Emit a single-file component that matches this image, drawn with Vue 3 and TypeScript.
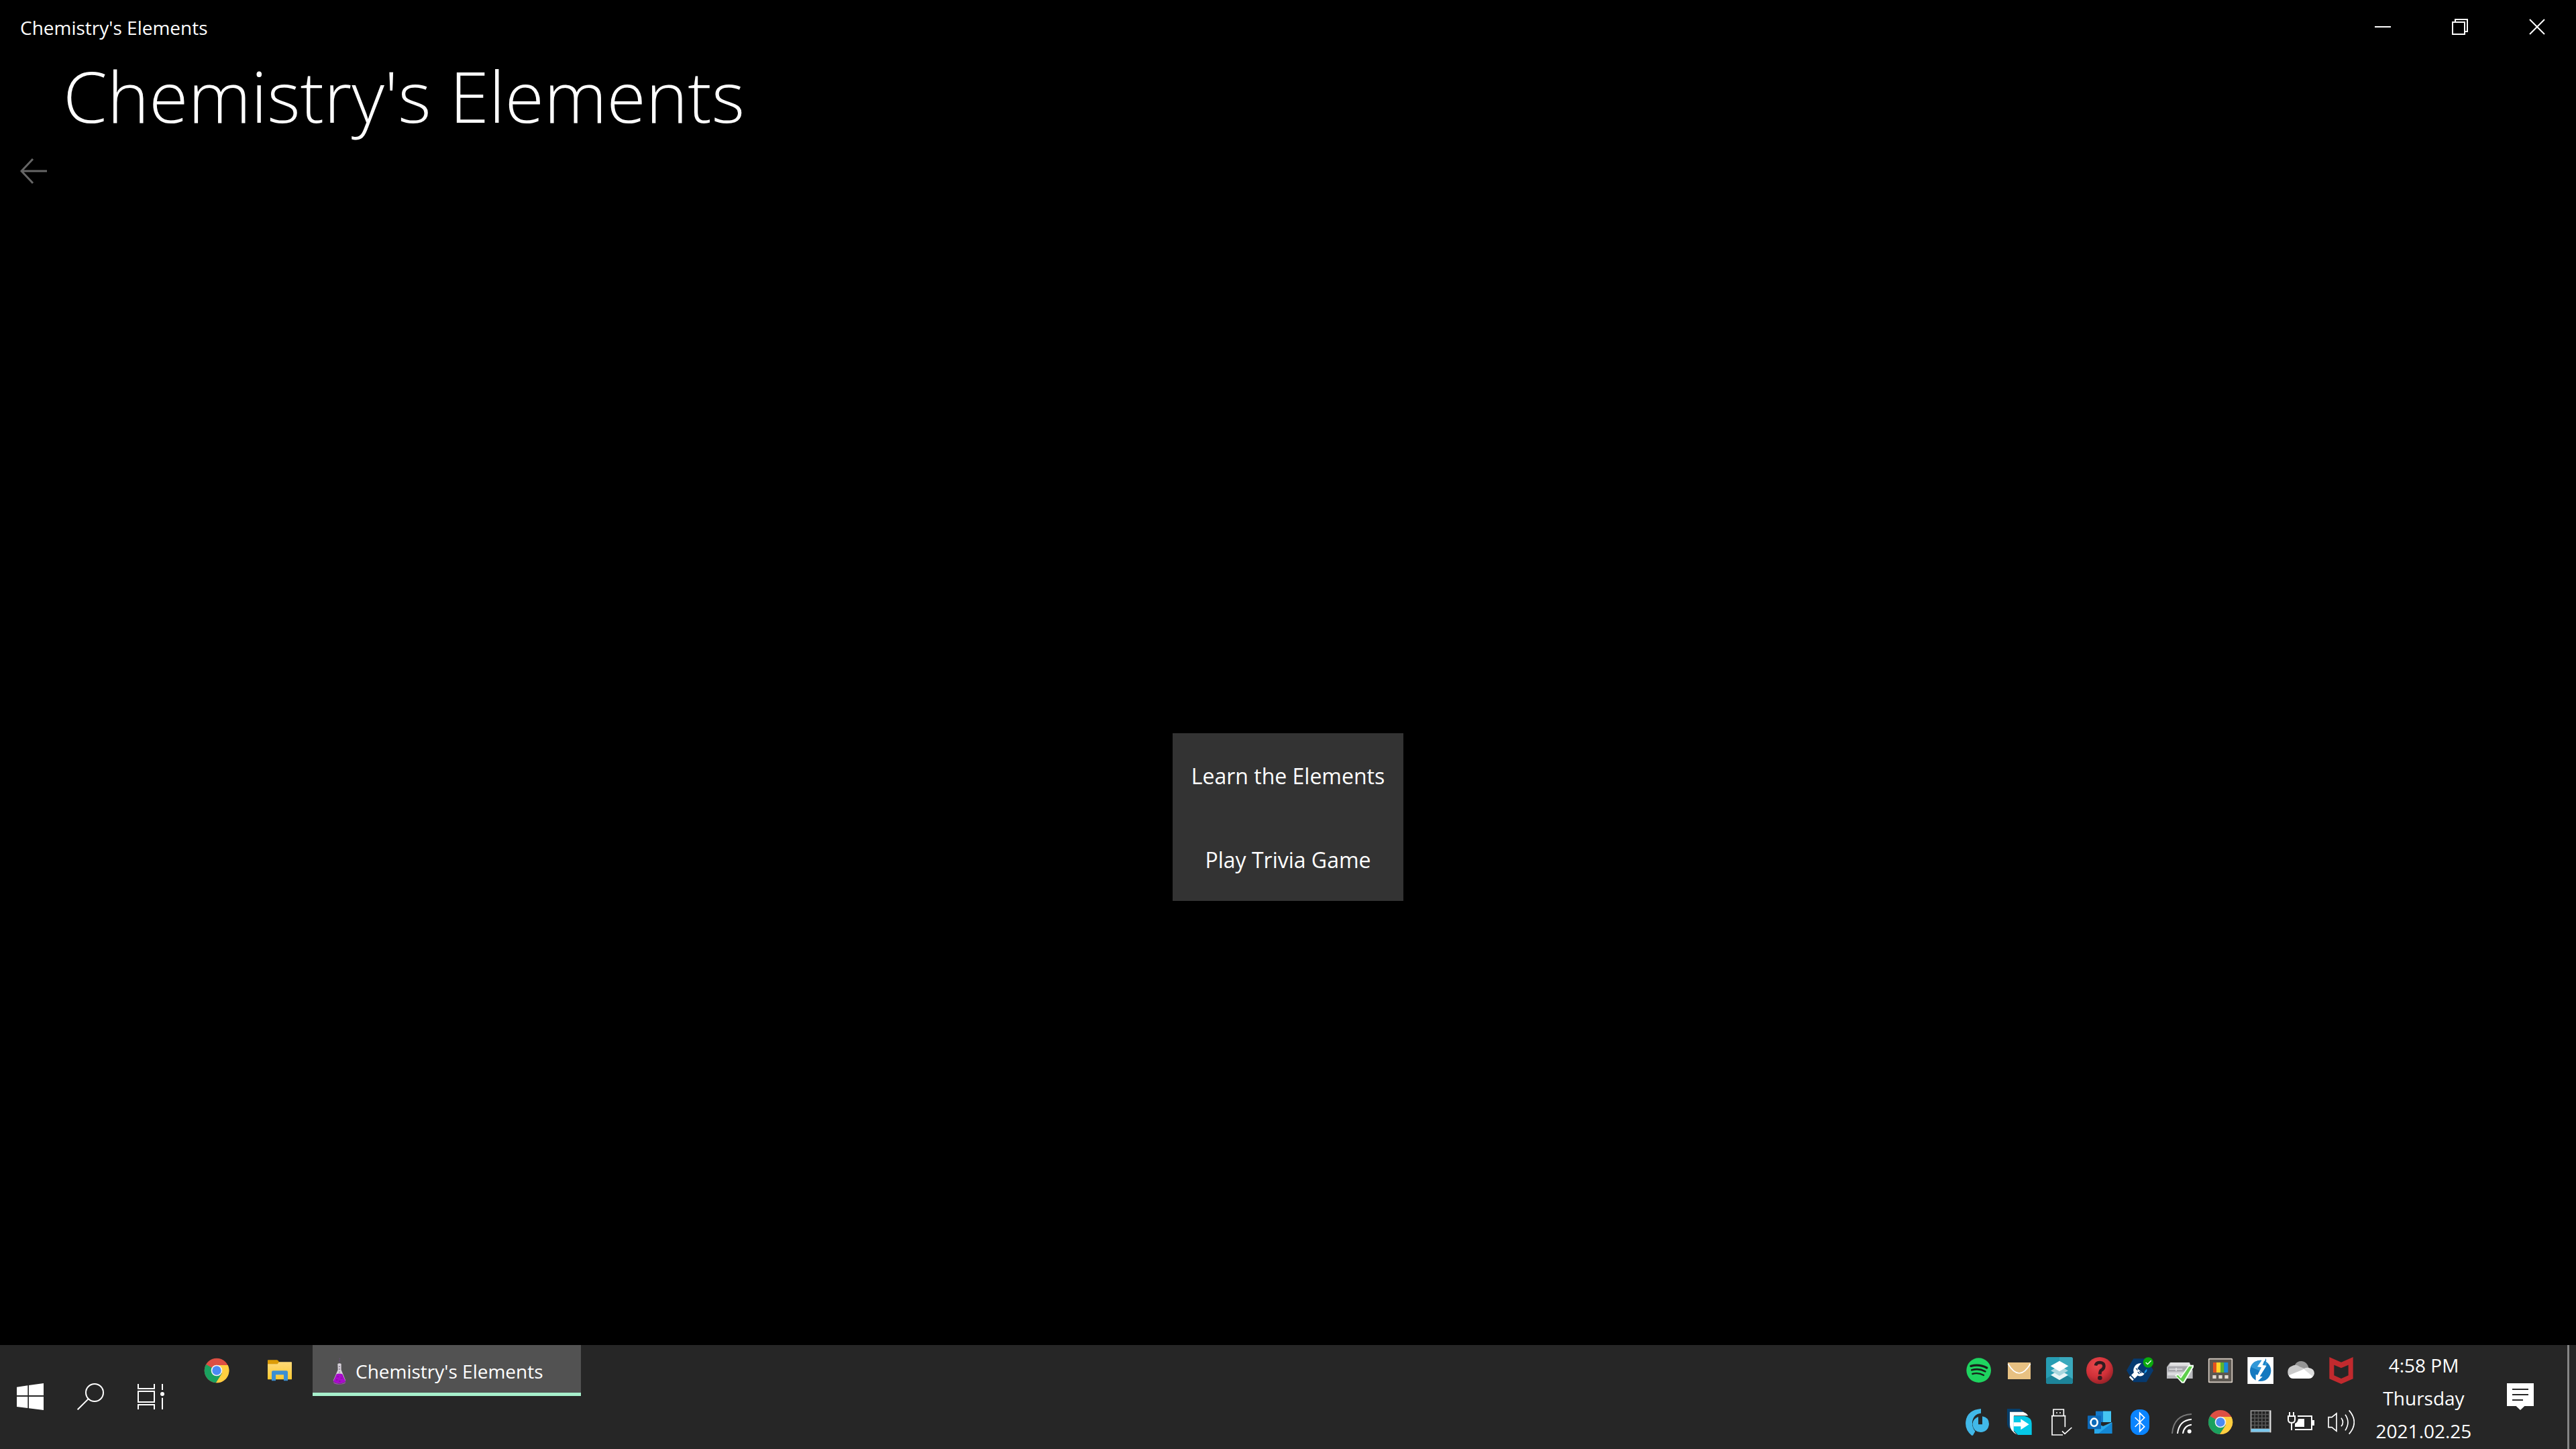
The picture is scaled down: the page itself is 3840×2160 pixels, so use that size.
<script setup lang="ts">
import { ref } from 'vue'

const appTitle = "Chemistry's Elements"
const menu: string[] = ['Learn the Elements', 'Play Trivia Game']
const clock = ref<string[]>(['4:58 PM', 'Thursday', '2021.02.25'])
const keypadCells = [0, 1, 2, 3, 4]
</script>

<template>
  <div class="desktop">
    <div class="window">
      <header class="titlebar">
        <span class="caption">{{ appTitle }}</span>
        <div class="window-controls">
          <button aria-label="Minimize">
            <svg viewBox="0 0 24 24" shape-rendering="crispEdges"><path d="M0 11h24v2H0z" fill="#fff" /></svg>
          </button>
          <button aria-label="Restore">
            <svg viewBox="0 0 24 24" fill="none" stroke="#fff" stroke-width="2" shape-rendering="crispEdges">
              <path d="M1 5h18v18H1zM5 5V1h18v18h-4" />
            </svg>
          </button>
          <button aria-label="Close">
            <svg viewBox="0 0 24 24" fill="none" stroke="#fff" stroke-width="2"><path d="M1 1l22 22M23 1L1 23" /></svg>
          </button>
        </div>
      </header>

      <h1>{{ appTitle }}</h1>

      <nav class="backbar">
        <button aria-label="Back" disabled>
          <svg viewBox="0 0 40 40" fill="none" stroke="#666" stroke-width="3"><path d="M40 20H2M19 2L2 20l17 18" /></svg>
        </button>
      </nav>

      <main>
        <div class="menu">
          <button v-for="item in menu" :key="item">{{ item }}</button>
        </div>
      </main>
    </div>

    <footer class="taskbar">
      <div class="system">
        <button aria-label="Start">
          <svg viewBox="0 0 120 120" fill="#fff">
            <path d="M0 17L49 10V54H0zM54 9L120 0V54H54zM0 60H49V111L0 105zM54 60H120V120L54 112z" />
          </svg>
        </button>
        <button aria-label="Search">
          <svg viewBox="0 0 120 120" fill="none" stroke="#fff" stroke-width="6">
            <circle cx="78" cy="42" r="39" /><path d="M50 70L2 118" />
          </svg>
        </button>
        <button aria-label="Task View">
          <svg viewBox="0 0 120 120" fill="none" stroke="#fff" stroke-width="6">
            <path d="M3 3V24H75V3M3 36H75V84H3zM3 117V96H75V117M111 3V30M111 65V117" />
            <circle cx="111" cy="48" r="9" fill="#fff" stroke="none" />
          </svg>
        </button>
      </div>

      <div class="apps">
        <button class="pinned" aria-label="Google Chrome">
          <svg viewBox="0 0 120 120">
            <circle cx="60" cy="60" r="55" fill="#dd4f43" />
            <path d="M60 60L12 33A55 55 0 0 0 57 115L84 74z" fill="#1aa15f" />
            <path d="M60 36H110A55 55 0 0 1 57 115L84 72z" fill="#ffcf40" />
            <path d="M12 33L38 72L60 60z" fill="#1aa15f" />
            <circle cx="60" cy="60" r="25" fill="#f1f1f1" /><circle cx="60" cy="60" r="20" fill="#4a8af4" />
          </svg>
        </button>
        <button class="pinned" aria-label="File Explorer">
          <svg viewBox="0 0 120 120">
            <defs>
              <linearGradient id="folder" x1="0" y1="0" x2="0" y2="1">
                <stop offset="0" stop-color="#ffda78" /><stop offset="1" stop-color="#fdc930" />
              </linearGradient>
            </defs>
            <path d="M6 15q0-2 2-2H48q4 0 9 9V32H6z" fill="#dc9c06" />
            <path d="M6 31H50L57 22H112q2 0 2 2V98q0 2-2 2H8q-2 0-2-2z" fill="url(#folder)" />
            <path d="M24 106V67q0-6 6-6H90q6 0 6 6v39H78V79H42v27z" fill="#3b8fd2" />
          </svg>
        </button>
        <button class="running">
          <svg viewBox="0 0 120 120">
            <path d="M59 3l4 3M61 10v3M58 15h5" stroke="#76508a" stroke-width="3" />
            <path d="M52 27q8-5 16 0V54L88 103q-28 22-56 0L53 54z" fill="#d5d0d9" />
            <path d="M47 73q13-5 26 0L88 106q-28 19-56 0z" fill="#a90bcb" />
            <path d="M32 108q28 20 56 0q-2 11-28 11t-28-11z" fill="#b04bc4" />
            <path d="M60 37v5M60 48v5M60 62v4" stroke="#73647e" stroke-width="4" />
            <path d="M50 85h7M65 91h8M45 99h7M57 105h8M71 81h4" stroke="#8510a3" stroke-width="4" />
          </svg>
          <span>{{ appTitle }}</span>
        </button>
      </div>

      <div class="tray">
        <button aria-label="Spotify">
          <svg viewBox="0 0 120 120">
            <circle cx="59" cy="59" r="55" fill="#1ed45f" />
            <g fill="none" stroke="#191f1b" stroke-linecap="round">
              <path d="M24 40Q62 30 95 48" stroke-width="10" /><path d="M28 58Q60 49 88 64" stroke-width="8" />
              <path d="M31 75Q58 68 81 81" stroke-width="7" />
            </g>
          </svg>
        </button>
        <button aria-label="Mail">
          <svg viewBox="0 0 120 120">
            <path d="M9 24H111V99H9z" fill="#e8c182" />
            <path d="M10 30Q60 114 110 30" fill="none" stroke="#fff" stroke-width="5" />
          </svg>
        </button>
        <button aria-label="Layers">
          <svg viewBox="0 0 120 120">
            <rect width="120" height="120" rx="10" fill="#279db3" />
            <path d="M60 0H110q10 0 10 10V98L60 60z" fill="#3aa9bd" /><path d="M0 96L60 62l60 36v12q0 10-10 10H10q-10 0-10-10z" fill="#1d8499" />
            <path d="M60 57l39 23-39 23L21 80z" fill="#e9f5f7" /><path d="M60 38l39 23-39 23L21 61z" fill="#a9d7df" />
            <path d="M60 17l40 23-40 24L20 40z" fill="#fff" />
          </svg>
        </button>
        <button aria-label="Help">
          <svg viewBox="0 0 120 120">
            <defs>
              <radialGradient id="redball" cx=".4" cy=".3" r=".75">
                <stop offset="0" stop-color="#e9494d" /><stop offset=".6" stop-color="#cf3038" /><stop offset="1" stop-color="#8f2026" />
              </radialGradient>
            </defs>
            <circle cx="60" cy="60" r="60" fill="url(#redball)" />
            <path d="M42 38Q44 24 61 24Q80 25 79 42Q78 53 68 58Q61 62 61 77" fill="none" stroke="#301c20" stroke-width="14" />
            <circle cx="61" cy="93" r="10" fill="#301c20" />
          </svg>
        </button>
        <button aria-label="System tools">
          <svg viewBox="0 0 120 120">
            <path d="M31 7H89L120 59L89 112H31L0 59z" fill="#063a70" />
            <path d="M91 53Q94 68 79 72Q80 60 91 53z" fill="#1d9bf0" />
            <path d="M19 98L42 75" stroke="#fff" stroke-width="22" /><path d="M14 77l28 29" stroke="#063a70" stroke-width="5" />
            <path d="M66 27Q39 28 32 50T48 82Q67 92 80 74L68 68L50 50L54 42z" fill="#fff" />
            <path d="M42 50l8 9M50 48l8 9M50 66l8 9M58 63l8 9" stroke="#063a70" stroke-width="4" />
            <circle cx="97" cy="24" r="23" fill="#0bab0d" />
            <path d="M86 24l8 8 16-16" fill="none" stroke="#fff" stroke-width="4" />
          </svg>
        </button>
        <button aria-label="Safely remove drive">
          <svg viewBox="0 0 120 120">
            <path d="M15 24H102L116 60V96H0V44z" fill="#b9b9bd" /><path d="M18 24H99L107 39H10z" fill="#e0e0e2" />
            <path d="M5 44H110V62H5z" fill="#a5a5aa" /><path d="M4 68H90V82H4z" fill="#dcdcdf" /><path d="M42 48v14M10 54h60" stroke="#e1e1e4" stroke-width="5" />
            <path d="M36 82l13-7 13 12 36-52h22V45L78 116H67z" fill="#f4fff2" />
            <path d="M42 84l8-3 13 14 37-53h14L74 110h-4z" fill="#5fcf4c" />
          </svg>
        </button>
        <button aria-label="PowerToys">
          <svg viewBox="0 0 120 120">
            <rect x="8" y="8" width="104" height="104" rx="2" fill="#5c5751" stroke="#d8cec4" stroke-width="5" />
            <path d="M27 24H45V69H27z" fill="#e2511e" /><path d="M42 24H61V69H42z" fill="#ffd529" /><path d="M60 24H77V69H60z" fill="#5ab532" />
            <path d="M76 24H94V69H76z" fill="#1789dc" /><path d="M25 81H41V96H25zM52 81H68V96H52zM79 81H95V96H79z" fill="#e3dad1" />
          </svg>
        </button>
        <button aria-label="Power utility">
          <svg viewBox="0 0 120 120">
            <path d="M1 0H117V120H1z" fill="#fff" /><circle cx="59" cy="61" r="47" fill="#1479c0" />
            <path d="M15 44A47 47 0 0 1 90 26L65 65z" fill="#3198d8" />
            <path d="M73 2L45 43L63 46L46 80L38 78V116L68 88L56 86L86 38L68 36L82 0z" fill="#fff" />
            <path d="M83 5L72 34H77L85 14z" fill="#1479c0" />
          </svg>
        </button>
        <button aria-label="OneDrive">
          <svg viewBox="0 0 120 120">
            <path d="M29 43Q39 17 62 18Q87 20 95 48L68 62z" fill="#949494" />
            <path d="M3 81Q-5 50 17 41Q39 28 54 43L83 54L42 89z" fill="#c9c9c9" />
            <path d="M58 64Q76 44 95 48Q120 52 120 73Q118 84 113 88z" fill="#dedede" />
            <path d="M5 82L73 54L113 87Q108 96 95 96H26Q9 96 5 82z" fill="#fff" />
          </svg>
        </button>
        <button aria-label="McAfee">
          <svg viewBox="0 0 120 120">
            <path fill-rule="evenodd" d="M7 0L60 23L113 0V97L60 120L7 97zM28 35V82L60 96L92 82V35L60 49z" fill="#c12a2e" />
          </svg>
        </button>

        <button aria-label="Sync">
          <svg viewBox="0 0 120 120" fill="#41b8e8">
            <path d="M69 0V20Q34 24 30 61Q29 84 43 101L33 119H27Q-4 94 1 56Q8 5 69 0z" />
            <path d="M57 36V70H75V34Q104 38 105 68Q102 102 67 105Q34 102 31 68Q34 44 57 36z" />
          </svg>
        </button>
        <button aria-label="File transfer">
          <svg viewBox="0 0 120 120">
            <path d="M6 0H62L80 14H18V91Q6 80 6 63z" fill="#073f6b" /><path d="M18 14H78Q91 18 100 31H36V101L50 116Q18 98 18 71z" fill="#fff" />
            <path d="M35 33H85Q115 39 116 65V117H54L35 97z" fill="#06c8e7" />
            <path d="M35 61H67V46L104 70L67 94V79H35z" fill="#fff" />
          </svg>
        </button>
        <button aria-label="Safely Remove Hardware">
          <svg viewBox="0 0 120 120" fill="none" stroke="#fff" stroke-width="5">
            <path d="M33 31V3H79V31M24 32H88M85 32V82M27 30V117H75M72 100l12 12L115 84" /><path d="M45 18h6M60 18h6" />
          </svg>
        </button>
        <button aria-label="Outlook">
          <svg viewBox="0 0 120 120">
            <path d="M42 11H111V60H42z" fill="#1479c9" /><path d="M75 11H111V60H75z" fill="#45c5f3" /><path d="M36 60L75 78L115 60V111H36z" fill="#28a8ea" />
            <path d="M54 111L115 63V111z" fill="#1487d4" /><rect x="6" y="31" width="60" height="60" rx="3" fill="#0d69b8" />
            <ellipse cx="35" cy="61" rx="15" ry="17" fill="none" stroke="#fff" stroke-width="8" />
          </svg>
        </button>
        <button aria-label="Bluetooth">
          <svg viewBox="0 0 120 120">
            <rect x="18" y="3" width="84" height="114" rx="37" fill="#0a84ff" />
            <path d="M38 39L80 80L59 101V19L80 40L38 81" fill="none" stroke="#fff" stroke-width="5" />
          </svg>
        </button>
        <button aria-label="Network">
          <svg viewBox="0 0 120 120" fill="none" stroke="#fff" stroke-width="6">
            <circle cx="101" cy="101" r="9" fill="#fff" stroke="none" />
            <path d="M72 111Q76 75 111 71M48 111Q54 52 111 47" /><path d="M24 111Q30 29 111 24" stroke="#777" />
          </svg>
        </button>
        <button aria-label="Chrome notifications">
          <svg viewBox="0 0 120 120">
            <circle cx="60" cy="60" r="54" fill="#dd4f43" />
            <path d="M60 60L13 33A54 54 0 0 0 57 114L84 74z" fill="#1aa15f" />
            <path d="M60 36H109A54 54 0 0 1 57 114L84 72z" fill="#ffcf40" />
            <circle cx="60" cy="60" r="25" fill="#f1f1f1" /><circle cx="60" cy="60" r="20" fill="#4a8af4" />
          </svg>
        </button>
        <button aria-label="Touchpad">
          <svg viewBox="0 0 120 120">
            <path d="M14 7H106V106H14z" fill="#979797" /><path d="M19 11H99V89H19z" fill="#555" />
            <g fill="#202020">
              <template v-for="r in keypadCells" :key="r">
                <rect v-for="c in keypadCells" :key="c" :x="20 + c * 16" :y="12 + r * 16" width="11" height="11" />
              </template>
            </g>
            <path d="M17 90H101V103H17z" fill="#7bc8ee" /><path d="M101 8H106V106H101z" fill="#e4e4e4" />
          </svg>
        </button>
        <button aria-label="Battery charging">
          <svg viewBox="0 0 120 120" fill="none" stroke="#fff" stroke-width="6">
            <path d="M45 33H108V93H33M0 33H36M3 33V48Q3 60 12 62H24Q33 60 33 48V33M9 33V15M27 33V15M18 62V96" />
            <path d="M48 45H75V81H33V66Q46 61 48 45zM110 51H120V75H110z" fill="#fff" stroke="none" />
          </svg>
        </button>
        <button aria-label="Volume">
          <svg viewBox="0 0 120 120" fill="none" stroke="#fff" stroke-width="5">
            <path d="M3 38H18L39 21V100L18 83H3zM60 41Q75 60 60 79" /><path d="M78 26Q102 60 78 97M95 7Q141 60 95 113" />
          </svg>
        </button>
      </div>

      <button class="clock">
        <span v-for="line in clock" :key="line">{{ line }}</span>
      </button>
      <button class="notifications" aria-label="Notifications">
        <svg viewBox="0 0 120 120">
          <path d="M0 0H120V102H79L60 120L41 102H0z" fill="#fff" />
          <path d="M24 27H96M24 51H96M24 75H72" stroke="#262626" stroke-width="6" />
        </svg>
      </button>
      <button class="show-desktop" aria-label="Show desktop"></button>
    </footer>
  </div>
</template>

<style>
body {
  margin: 0;
  background: #000;
}
</style>

<style scoped>
.desktop {
  min-height: 100vh;
  display: flex;
  flex-direction: column;
  background: #000;
  color: #fff;
  font-family: "Open Sans", "Noto Sans", sans-serif;
  font-size: 28px;
}
button {
  margin: 0;
  padding: 0;
  border: 0;
  background: none;
  color: inherit;
  font: inherit;
  display: flex;
  align-items: center;
  justify-content: center;
}
svg {
  display: block;
  width: 40px;
  height: 40px;
  flex: none;
}
.window {
  flex: 1;
  display: flex;
  flex-direction: column;
}
.titlebar {
  height: 80px;
  display: flex;
  align-items: center;
  justify-content: space-between;
}
.caption {
  padding: 2px 0 0 30px;
}
.window-controls {
  display: flex;
  align-self: stretch;
}
.window-controls button {
  width: 115px;
  padding-right: 1px;
}
.window-controls svg {
  width: 24px;
  height: 24px;
}
h1 {
  margin: 0;
  padding-left: 94px;
  font-size: 106px;
  line-height: 124px;
  font-weight: 300;
}
.backbar {
  height: 102px;
  display: flex;
  padding-left: 30px;
}
main {
  flex: 1;
  display: flex;
  align-items: center;
  justify-content: center;
  padding-top: 124px;
}
.menu {
  display: flex;
  flex-direction: column;
  background: #333;
}
.menu button {
  height: 125px;
  padding: 2px 28px 0;
  font-size: 32px;
}
.taskbar {
  height: 155px;
  display: flex;
  background: #262626;
}
.system,
.apps {
  display: flex;
}
.system button {
  width: 90px;
  padding-bottom: 1px;
}
.apps {
  flex: 1;
  align-items: flex-start;
  padding-left: 6px;
}
.pinned {
  width: 94px;
  height: 76px;
}
.running {
  width: 400px;
  height: 76px;
  margin-left: 2px;
  padding: 2px 0 0 20px;
  justify-content: flex-start;
  gap: 4px;
  background: #525252;
  box-shadow: inset 0 -5px #a7f0cc;
}
.tray {
  display: grid;
  grid-template-columns: repeat(10, 60px);
  grid-auto-rows: 76px;
  row-gap: 1px;
}
.clock {
  width: 186px;
  padding-top: 4px;
  flex-direction: column;
  line-height: 49px;
}
.notifications {
  width: 102px;
  padding-bottom: 1px;
}
.show-desktop {
  width: 13px;
  margin-left: 19px;
  border-left: 3px solid #858585;
}
</style>
